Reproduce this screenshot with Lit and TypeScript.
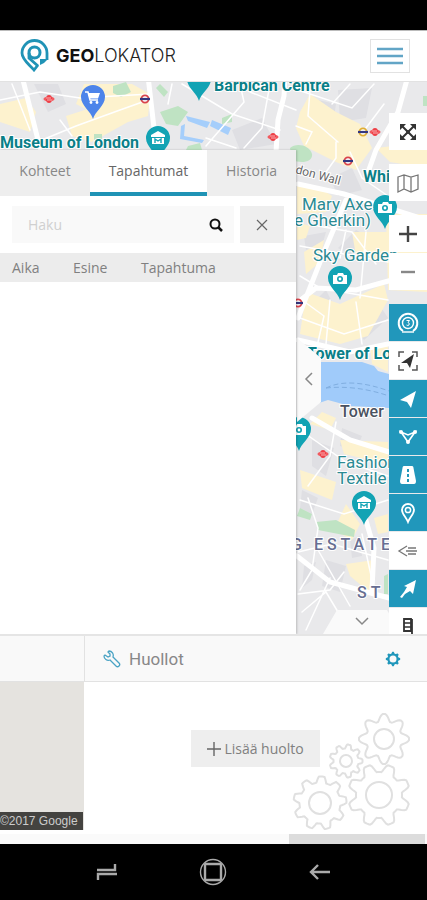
import { LitElement, html, css, svg } from "lit";
import { customElement } from "lit/decorators.js";
import { classMap } from "lit/directives/class-map.js";

/** Closed outline of a cog with rounded teeth. */
function cog(cx: number, cy: number, r: number, depth: number, teeth: number, sharp = 1.7, turn = 0) {
  const steps = teeth * 16;
  let d = "";
  for (let i = 0; i < steps; i++) {
    const a = (i / steps) * Math.PI * 2;
    const wave = Math.max(-1, Math.min(1, sharp * Math.cos(teeth * a + turn)));
    const rad = r - depth / 2 + (depth / 2) * wave;
    d += `${i ? "L" : "M"}${(cx + rad * Math.cos(a)).toFixed(1)} ${(cy + rad * Math.sin(a)).toFixed(1)}`;
  }
  return d + "Z";
}

const pin = (x: number, y: number, glyph: string, fill = "#12a3b4") => svg`
  <g transform="translate(${x} ${y})">
    <path fill=${fill} d="M0 22C-2 14-12 9-12 0A12 12 0 0 1 12 0C12 9 2 14 0 22Z"/>
    ${glyph === "museum" ? svg`<path fill="#fff" d="M0-7L7-3V-1H-7V-3ZM-6 0H6V6H-6Z"/><path d="M-3 5V1L0 3L3 1V5" fill="none" stroke="#12a3b4" stroke-width="1.4"/>` : ""}
    ${glyph === "camera" ? svg`<path fill="#fff" d="M-7-3H-3L-2-5H3L4-3H7V6H-7Z"/><circle cy="1" r="3" fill="#12a3b4"/><circle cy="1" r="1.4" fill="#fff"/>` : ""}
    ${glyph === "cart" ? svg`<path fill="none" stroke="#fff" stroke-width="1.5" d="M-8-5H-5L-3 3H5"/><path fill="#fff" d="M-5-4H7L5 1.5H-3.5Z"/><circle cx="-2" cy="5.5" r="1.4" fill="#fff"/><circle cx="4" cy="5.5" r="1.4" fill="#fff"/>` : ""}
  </g>`;

const rail = (x: number, y: number) => svg`
  <g transform="translate(${x} ${y})"><ellipse rx="5.5" ry="2.4" fill="#f25a5f"/><ellipse rx="3" ry="4" fill="#ee3f46"/><path d="M-3-1H2M-2 1H3" stroke="#fff" stroke-width=".6"/></g>`;

const tube = (x: number, y: number, ring = "#d9434b") => svg`
  <g transform="translate(${x} ${y})"><circle r="3.6" fill="#fff" stroke=${ring} stroke-width="1.8"/><path d="M-5 0H5" stroke="#34367f" stroke-width="2.2"/></g>`;

@customElement("city-map")
class CityMap extends LitElement {
  static styles = css`
    :host { display: block; width: 100%; height: 100%; }
    .canvas { display: block; width: 100%; height: 100%; background: #e9e9eb; }
    .place { font: 400 17px Roboto, sans-serif; fill: #2b8a93; stroke: #fff; stroke-width: 2px; paint-order: stroke; }
    .strong { font-weight: 700; font-size: 16px; fill: #0a7f88; }
    .dark { fill: #4b5260; font-weight: 500; font-size: 16px; }
    .street { fill: #666; font-size: 12px; }
    .district { fill: #676e92; font-weight: 500; font-size: 16px; letter-spacing: 4px; }
  `;
  render() {
    return html`
      <svg class="canvas" viewBox="0 82 427 552" preserveAspectRatio="xMinYMin slice" role="img" aria-label="Kartta">
        <g fill="#dfdfe3">
          <path d="M34 84L58 84L66 104L48 112ZM120 100L140 90L138 118L124 114ZM232 130L262 118L276 144L240 150ZM338 90L372 88L366 118L340 122ZM318 100L336 104L332 130L314 118Z"/>
          <path d="M330 178L352 168L362 190L338 196ZM304 236L326 232L322 246L306 250ZM338 248L356 230L368 236L356 258ZM352 322L376 300L388 318L364 340ZM316 300L326 290L334 306L322 316Z"/>
          <path d="M312 440L334 448L326 476L312 466ZM342 428L362 436L356 450L340 446ZM302 490L318 498L312 514L300 508ZM326 560L346 566L340 592L322 586ZM304 566L316 562L312 580L302 588ZM350 540L360 536L362 556L352 558Z"/>
        </g>
        <g fill="#fdf2ce">
          <path d="M84 84L132 84L150 94L112 110L104 118L76 104ZM0 104L26 98L36 112L30 132L0 122Z"/>
          <path d="M66 116L122 98L150 98L148 116L128 122L92 142L72 136Z"/>
          <path d="M310 94L336 112L360 124L372 148L356 170L336 162L304 146L296 128L300 112ZM376 148L427 142V168L390 162Z"/>
          <path d="M297 184L320 188L332 196L326 212L297 214ZM352 232L388 232V262L356 256ZM304 252L324 240L320 262L306 274ZM306 292L340 304L384 284L388 300L368 336L340 344L300 334ZM297 222L310 226L306 238L297 240Z"/>
          <path d="M386 214H427V292L388 290ZM322 412L336 418L330 430L310 424ZM340 440L388 442V464L344 454ZM300 470L336 482L332 500L302 488ZM346 504L360 524L352 540L334 530ZM346 564L374 560L374 596L350 576Z"/>
          <path d="M370 346H388V372L372 364ZM374 518L388 514V532L378 534Z"/>
        </g>
        <g fill="#bfe3c3">
          <path d="M113 86L126 82L131 92L121 97L113 93ZM160 112L178 106L188 112L178 126L166 124ZM222 118L232 114L232 122L222 124ZM188 146L200 143L202 150H186ZM94 134H102V140H94Z"/>
          <path d="M160 84L168 92L164 97L156 88ZM290 148C296 142 310 145 312 154C313 162 302 164 292 160ZM423 96H427V106H423Z"/>
          <path d="M300 508L312 514L310 520L297 516ZM316 522L336 520L355 530L354 537L318 530ZM384 576L388 574V594H384Z"/>
        </g>
        <path fill="#a5cefb" d="M186 116L210 122L207 128L188 121ZM212 120L231 128L228 135L210 126ZM181 126L185 124L184 136L204 140L202 143L180 139Z"/>
        <path fill="#a0cbfa" d="M316 362L362 362L374 366L378 371L389 374V408L350 406L328 400L316 404Z"/>
        <path d="M326 388C342 380 364 382 389 391M326 388C344 386 366 388 389 396" fill="none" stroke="#80aee0" stroke-dasharray="5 3"/>
        <g fill="none" stroke="#fff" stroke-linecap="round">
          <g stroke-width="1.5">
            <path d="M0 100L40 92L80 98L150 94M42 140L76 126L120 110L148 100M60 120L72 136M12 84L30 130M172 84L168 104M182 84L232 114L280 130M206 146L244 102L240 84M206 138L236 148M250 92L296 110M270 84L262 128L244 148"/>
            <path d="M296 126L312 132L306 144M310 90L308 116L338 142M298 90L352 108L374 84M332 104L350 84M336 142L336 158L326 172M350 152L362 178L388 196M366 128L384 104"/>
            <path d="M300 246L388 262M318 226L352 232L376 264M300 276L320 288L388 300M330 300L326 344M356 302L362 344M300 318L344 334L388 320M346 230L340 258M366 232L360 298M302 300L324 316L318 342"/>
            <path d="M300 430L346 462L388 476M336 422L330 456L308 486M300 500L344 514L388 500M362 534L372 580M308 498L318 528L312 570L300 590M298 552L332 544L388 560M302 612L326 592L338 612M318 550L350 606M330 578L306 630M298 594L330 590L344 572"/>
          </g>
          <g stroke-width="5">
            <path d="M22 76L40 148M148 76L154 128M285 76L284 96L278 120L276 152M408 76L398 112L376 150L366 178M298 184L344 194L427 220"/>
            <path d="M346 200L324 252L298 318M298 302L316 288L356 290L392 280M298 340L350 352L388 344"/>
            <path d="M312 418L350 440L389 452M297 556L330 582L389 598M360 500L374 548L372 590"/>
          </g>
        </g>
        ${rail(49, 99)}${rail(273, 137)}${rail(375, 132)}${rail(323, 454)}
        ${tube(145, 99)}${tube(348, 161)}${tube(298, 303)}${tube(363, 132, "#dfae36")}
        ${pin(93, 97, "cart", "#4d84ea")}${pin(199, 79, "")}${pin(158, 138, "museum")}
        ${pin(385, 207, "camera")}${pin(340, 278, "camera")}${pin(299, 429, "camera")}${pin(364, 503, "museum")}
        <text class="place strong" x="0" y="148">Museum of London</text>
        <text class="place strong" x="214" y="91">Barbican Centre</text>
        <text class="place street" transform="translate(295 173) rotate(15)">don Wall</text>
        <text class="place strong" x="363" y="182">White</text>
        <text class="place" x="302" y="210">Mary Axe</text>
        <text class="place" x="294" y="226">e Gherkin)</text>
        <text class="place" x="313" y="261">Sky Garden</text>
        <text class="place strong" x="307" y="359">Tower of London</text>
        <text class="place dark" x="340" y="417">Tower</text>
        <text class="place" x="337" y="468">Fashion</text>
        <text class="place" x="337" y="484">Textile</text>
        <text class="place district" x="291" y="550">G ESTATE</text>
        <text class="place district" x="357" y="598">ST</text>
      </svg>`;
  }
}

const tools = [
  { label: "Koko näyttö", cls: "", art: svg`<path d="M5 5L17 17M17 5L5 17" stroke="currentColor" stroke-width="2"/><path d="M3 3H9L3 9ZM19 3V9L13 3ZM3 19V13L9 19ZM19 19H13L19 13Z" fill="currentColor"/><circle cx="11" cy="11" r="2" fill="currentColor"/>` },
  { label: "Karttatyyppi", cls: "spaced", art: svg`<path d="M1 5L7 3L14 5L21 3V17L14 20L7 17L1 20ZM7 3V17M14 5V20" fill="none" stroke="#777" stroke-width="1.3"/>` },
  { label: "Lähennä", cls: "spaced", art: svg`<path d="M2 11H20M11 3V19" stroke="#444" stroke-width="2.4"/>` },
  { label: "Loitonna", cls: "", art: svg`<path d="M4 11H18" stroke="#888" stroke-width="2.4"/>` },
  { label: "Ryhmittely", cls: "blue spaced", art: svg`<circle cx="11" cy="11" r="5.5" fill="none" stroke="#fff" stroke-width="1.4"/><path d="M6 19A9.3 9.3 0 1 1 16 19" fill="none" stroke="#fff" stroke-width="2"/><path d="M9.5 8.5H12.5L11 10.5Q13 11 12 13Q11 14 9.5 13" fill="none" stroke="#fff" stroke-width="1"/><path d="M5 20H17" stroke="#fff" stroke-width="1.4"/>` },
  { label: "Kohdista", cls: "", art: svg`<path d="M2 7V2H7M15 2H20V7M20 15V20H15M7 20H2V15" fill="none" stroke="#555" stroke-width="1.5"/><path d="M17 4L13 18L10 13L4 13Z" fill="#333"/>` },
  { label: "Sijainti", cls: "blue", art: svg`<path d="M19 3L14 20L10 14L3 12Z" fill="#fff"/>` },
  { label: "Alue", cls: "blue", art: svg`<path d="M4 6L11 16L18 6L11 9Z" fill="none" stroke="#fff" stroke-width="1.6"/><circle cx="4" cy="6" r="2" fill="#fff"/><circle cx="18" cy="6" r="2" fill="#fff"/><circle cx="11" cy="16" r="2" fill="#fff"/>` },
  { label: "Reitti", cls: "blue", art: svg`<path d="M7 2H15Q16 2 16.3 3L19 17Q19 20 17 20H5Q3 20 3 17L5.7 3Q6 2 7 2Z" fill="#fff"/><path d="M11 5V8M11 10V13M11 15V18" stroke="#2197bb" stroke-width="2"/>` },
  { label: "Paikat", cls: "blue", art: svg`<path d="M11 20C9 15 5 12 5 8A6 6 0 0 1 17 8C17 12 13 15 11 20Z" fill="none" stroke="#fff" stroke-width="1.8"/><circle cx="11" cy="8" r="2.6" fill="none" stroke="#fff" stroke-width="1.5"/>` },
  { label: "Suunta", cls: "", art: svg`<path d="M10 6L2 11L10 16M9 11H20M11 8H19M11 14H19" fill="none" stroke="#777" stroke-width="1.3"/>` },
  { label: "Seuranta", cls: "blue", art: svg`<path d="M19 2L16 16L13 13L8 16L5 20L3 19L7 14L10 9L7 8Z" fill="#fff"/>` },
  { label: "Liikenne", cls: "", art: svg`<path d="M7 3H14V15H7ZM15 3V20H12" fill="none" stroke="#333" stroke-width="1.8"/><path d="M7 7H14M7 11H14" stroke="#333" stroke-width="1.5"/>` },
];

@customElement("map-tools")
class MapTools extends LitElement {
  static styles = css`
    :host { display: flex; flex-direction: column; gap: 1px; overflow: hidden; }
    .tool { flex: none; display: grid; place-items: center; width: 38px; height: 37px; padding: 0; border: 0; background: #fff; color: #333; }
    .spaced { margin-top: 13px; }
    .blue { background: #2197bb; }
    .icon { width: 22px; height: 22px; }
  `;
  render() {
    return tools.map(
      (t) => html`<button class="tool ${t.cls}" aria-label=${t.label}><svg class="icon" viewBox="0 0 22 22">${t.art}</svg></button>`
    );
  }
}

@customElement("event-panel")
class EventPanel extends LitElement {
  static styles = css`
    :host { display: flex; flex-direction: column; background: #fff; color: #808080; font: 400 14px/20px "Open Sans", sans-serif; box-shadow: 1px 0 2px #0003; }
    .tabs { display: grid; grid-template-columns: 90fr 117fr 89fr; background: #eee; }
    .tab { height: 46px; padding: 0; border: 0; border-bottom: 4px solid transparent; background: none; color: #888; font: inherit; }
    .on { background: #fff; border-color: #1f93b5; color: #666; }
    .search { display: flex; gap: 6px; padding: 10px 12px; }
    .field { flex: 1; display: flex; align-items: center; min-width: 0; padding-right: 10px; background: #f9f9f9; }
    .input { flex: 1; min-width: 0; height: 37px; padding: 0 16px; border: 0; background: none; font: inherit; color: #555; }
    .input::placeholder { color: #d0d0d0; opacity: 1; }
    .go { display: grid; place-items: center; width: 16px; height: 16px; padding: 0; border: 0; background: none; }
    .clear { display: grid; place-items: center; width: 44px; height: 37px; padding: 0; border: 0; background: #eee; }
    .mark { width: 16px; height: 16px; }
    .events { width: 100%; border-collapse: collapse; table-layout: fixed; }
    .head { height: 29px; padding: 0 0 0 12px; background: #ececec; text-align: left; font-weight: 400; }
    .time { width: 49px; }
    .item { width: 56px; }
  `;
  render() {
    return html`
      <div class="tabs" role="tablist">
        ${["Kohteet", "Tapahtumat", "Historia"].map(
          (t, i) => html`<button role="tab" aria-selected=${i === 1} class=${classMap({ tab: true, on: i === 1 })}>${t}</button>`
        )}
      </div>
      <form class="search">
        <div class="field">
          <input class="input" type="text" aria-label="Haku" placeholder="Haku" />
          <button class="go" type="button" aria-label="Hae">
            <svg class="mark" viewBox="0 0 16 16"><circle cx="7" cy="7" r="4.5" fill="none" stroke="#111" stroke-width="2"/><path d="M10 10L14 14" stroke="#111" stroke-width="2.5"/></svg>
          </button>
        </div>
        <button class="clear" type="reset" aria-label="Tyhjennä">
          <svg class="mark" viewBox="0 0 16 16"><path d="M3 3L13 13M13 3L3 13" stroke="#666" stroke-width="1.2"/></svg>
        </button>
      </form>
      <table class="events">
        <thead><tr><th class="head time">Aika</th><th class="head item">Esine</th><th class="head">Tapahtuma</th></tr></thead>
        <tbody></tbody>
      </table>`;
  }
}

@customElement("app-root")
class AppRoot extends LitElement {
  static styles = css`
    :host { display: flex; flex-direction: column; min-height: 100vh; background: #fff; color: #777; font: 400 14px/20px "Open Sans", sans-serif; }
    .status { height: 30px; background: #000; }
    .top { display: flex; align-items: center; justify-content: space-between; height: 52px; padding: 0 17px 0 20px; box-sizing: border-box; border-top: 1px solid #bbb; border-bottom: 1px solid #e2e2e2; }
    .brand { display: flex; align-items: center; gap: 7px; color: #222; text-decoration: none; font: 300 18px/24px Inter, sans-serif; }
    .geo { font-weight: 700; color: #111; }
    .logo { width: 29px; height: 34px; }
    .menu { display: grid; place-items: center; width: 40px; height: 34px; padding: 0; border: 1px solid #e2e2e2; background: #fff; }
    .bars { width: 26px; height: 18px; }
    .stage { position: relative; flex: 1; display: flex; min-height: 480px; overflow: hidden; }
    .map { position: absolute; inset: 0; }
    .panel { position: relative; width: calc(100% - 131px); margin-top: 68px; }
    .tools { position: absolute; top: 31px; right: 0; bottom: 0; }
    .fold { position: absolute; top: 256px; left: calc(100% - 130px); width: 24px; height: 84px; padding: 0; border: 0; background: #fafafa; clip-path: polygon(0 0, 100% 20px, 100% 64px, 0 100%); }
    .drop { position: absolute; right: 26px; bottom: 0; width: 78px; height: 24px; padding: 0; border: 0; background: #fafafa; clip-path: polygon(14px 0, 64px 0, 100% 100%, 0 100%); }
    .chevron { width: 14px; height: 14px; }
    .cards { display: grid; grid-template-columns: 84px 1fr; border-top: 2px solid #e5e5e5; }
    .bar { display: flex; align-items: center; gap: 8px; height: 46px; padding: 0 26px 0 18px; box-sizing: border-box; background: #f9f9f9; border-bottom: 1px solid #e2e2e2; border-left: 1px solid #e2e2e2; }
    .first { border-left: 0; }
    .title { flex: 1; margin: 0; font: 400 17px/20px Roboto, sans-serif; color: #888; }
    .wrench { width: 18px; height: 18px; }
    .settings { display: grid; padding: 0; border: 0; background: none; }
    .view { display: flex; flex-direction: column; justify-content: flex-end; align-items: flex-start; height: 148px; background: #e5e3df; }
    .credit { width: 100%; height: 18px; overflow: hidden; background: #444340; color: #ccc; font: 400 12px/18px "Liberation Sans", sans-serif; white-space: nowrap; border-right: 1px solid #e5e3df; box-sizing: border-box; }
    .service { position: relative; display: flex; justify-content: center; align-items: flex-start; height: 148px; padding-top: 48px; box-sizing: border-box; }
    .add { display: flex; justify-content: center; align-items: center; gap: 3px; width: 129px; height: 37px; padding: 0; border: 0; background: #eee; color: #808080; font: inherit; }
    .plus { width: 14px; height: 14px; }
    .cogs { position: absolute; right: 16px; bottom: 0; width: 120px; height: 120px; }
    .track { display: flex; justify-content: flex-end; height: 10px; margin-top: 4px; padding-right: 2px; background: #fafafa; }
    .thumb { width: 32%; background: #dcdcdc; }
    .nav { display: grid; grid-template-columns: repeat(3, 1fr); place-items: center; height: 56px; padding: 0 54px; background: #000; }
    .key { display: grid; width: 28px; height: 28px; padding: 0; border: 0; background: none; }
  `;
  render() {
    return html`
      <div class="status"></div>
      <header class="top">
        <a class="brand" href="#">
          <svg class="logo" viewBox="0 0 29 34" fill="none" stroke="#2093b6">
            <path d="M18 26L14 31C10 26 2 21 2 14A12.5 12.5 0 0 1 27 14V21" stroke-width="2.8"/>
            <path d="M20 20H28L24 24L20 26Z" fill="#2093b6" stroke="none"/>
            <circle cx="14.5" cy="13.5" r="5.5" stroke-width="3"/>
            <path d="M9 14V19L18 27" stroke-width="2.8"/>
          </svg>
          <span><span class="geo">GEO</span>LOKATOR</span>
        </a>
        <button class="menu" aria-label="Valikko">
          <svg class="bars" viewBox="0 0 26 18"><path d="M0 2H26M0 9H26M0 16H26" stroke="#62a5c6" stroke-width="2.6"/></svg>
        </button>
      </header>
      <main class="stage">
        <city-map class="map"></city-map>
        <button class="fold" aria-label="Piilota paneeli"><svg class="chevron" viewBox="0 0 14 14"><path d="M10 1L4 7L10 13" fill="none" stroke="#888" stroke-width="1.5"/></svg></button>
        <event-panel class="panel"></event-panel>
        <button class="drop" aria-label="Piilota kortit"><svg class="chevron" viewBox="0 0 14 14"><path d="M1 4L7 10L13 4" fill="none" stroke="#888" stroke-width="1.5"/></svg></button>
        <map-tools class="tools"></map-tools>
      </main>
      <section class="cards">
        <div>
          <div class="bar first"></div>
          <div class="view"><div class="credit">©2017 Google</div></div>
        </div>
        <div>
          <div class="bar">
            <svg class="wrench" viewBox="0 0 18 18"><path d="M6 1L5 2L7 4V6L5 7L2 5L1 6C1 9 4 11 7 10L13 16C15 18 18 15 16 13L10 7C11 4 9 1 6 1Z" fill="none" stroke="#4aa3c4" stroke-width="1.3"/></svg>
            <h2 class="title">Huollot</h2>
            <button class="settings" aria-label="Asetukset"><svg width="16" height="16" viewBox="0 0 16 16"><path d=${cog(8, 8, 7.2, 1.6, 8)} fill="#2197bb"/><circle cx="8" cy="8" r="3.5" fill="#f9f9f9"/></svg></button>
          </div>
          <div class="service">
            <svg class="cogs" viewBox="291 710 120 120" fill="none" stroke="#e0e0e0" stroke-width="2">
              <path d=${cog(384, 739, 25, 7, 8, 1.1)}/><circle cx="384" cy="739" r="10"/>
              <path d=${cog(346, 761, 16.5, 4, 9)}/><circle cx="346" cy="761" r="6"/>
              <path d=${cog(320, 803, 26.5, 6, 9, 1.7, 1)}/><circle cx="320" cy="803" r="11"/>
              <path d=${cog(379, 795, 31, 8, 8, 1.7, Math.PI)}/><circle cx="379" cy="795" r="13"/>
            </svg>
            <button class="add"><svg class="plus" viewBox="0 0 14 14"><path d="M7 0V14M0 7H14" stroke="#666" stroke-width="1.4"/></svg>Lisää huolto</button>
          </div>
        </div>
      </section>
      <div class="track"><div class="thumb"></div></div>
      <nav class="nav">
        <button class="key" aria-label="Viimeisimmät"><svg viewBox="0 0 28 28" fill="none" stroke="#aaa" stroke-width="2.4"><path d="M4 12H22V6M24 16H5V22"/></svg></button>
        <button class="key" aria-label="Koti"><svg viewBox="0 0 28 28" fill="none" stroke="#aaa"><circle cx="14" cy="14" r="12.5" stroke-width="1.4"/><rect x="6" y="6" width="16" height="16" rx="1" stroke-width="2.4"/></svg></button>
        <button class="key" aria-label="Takaisin"><svg viewBox="0 0 28 28" fill="none" stroke="#aaa" stroke-width="2.4"><path d="M24 14H5M12 7L5 14L12 21"/></svg></button>
      </nav>`;
  }
}
